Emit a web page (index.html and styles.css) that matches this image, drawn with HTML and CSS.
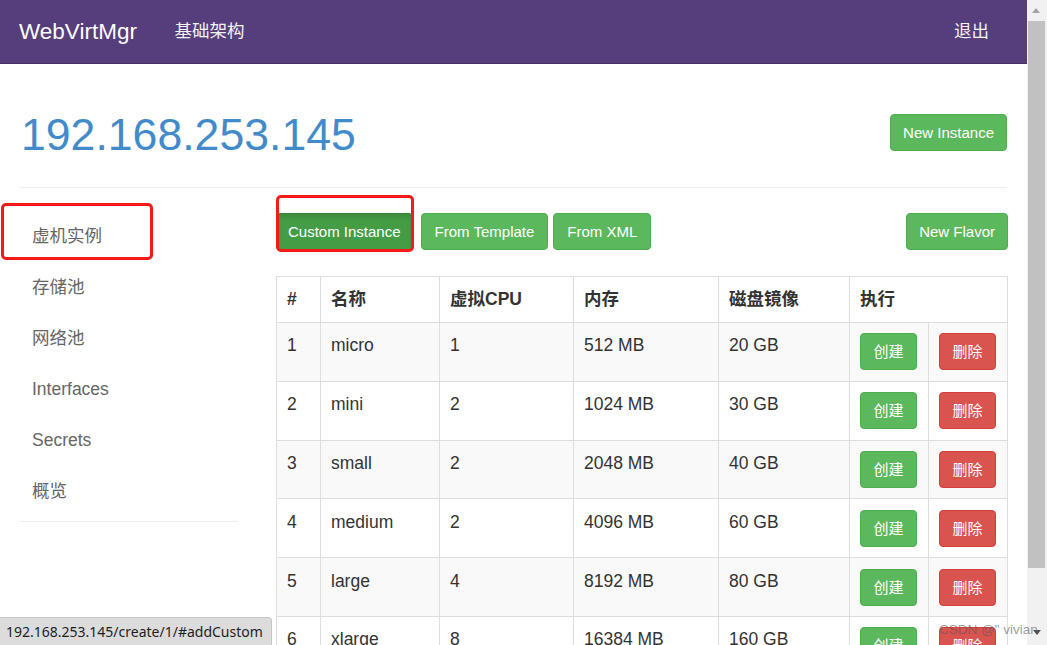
FILE: index.html
```html
<!DOCTYPE html>
<html lang="zh-CN">
<head>
<meta charset="utf-8">
<title>WebVirtMgr</title>
<link rel="stylesheet" href="styles.css">
</head>
<body>
<div class="screen">
  <div class="viewport">
    <nav class="navbar">
      <div class="nav-left">
        <a class="brand">WebVirtMgr</a>
        <a class="nav-link">基础架构</a>
      </div>
      <a class="nav-link">退出</a>
    </nav>
    <div class="container">
      <div class="page-header">
        <h1 class="title">192.168.253.145</h1>
        <a class="btn btn-success header-btn">New Instance</a>
      </div>
      <div class="layout">
        <aside class="sidebar">
          <ul class="side-nav">
            <li>虚机实例</li>
            <li>存储池</li>
            <li>网络池</li>
            <li>Interfaces</li>
            <li>Secrets</li>
            <li>概览</li>
          </ul>
        </aside>
        <main class="main">
          <div class="toolbar">
            <div class="toolbar-left">
              <a class="btn btn-success active">Custom Instance</a>
              <a class="btn btn-success">From Template</a>
              <a class="btn btn-success">From XML</a>
            </div>
            <a class="btn btn-success">New Flavor</a>
          </div>
          <table class="flavors">
            <colgroup>
              <col class="c-num"><col class="c-name"><col class="c-cpu"><col class="c-mem"><col class="c-disk"><col class="c-act"><col class="c-act">
            </colgroup>
            <thead>
              <tr><th>#</th><th>名称</th><th>虚拟CPU</th><th>内存</th><th>磁盘镜像</th><th colspan="2">执行</th></tr>
            </thead>
            <tbody>
              <tr><td>1</td><td>micro</td><td>1</td><td>512 MB</td><td>20 GB</td><td><a class="btn btn-success">创建</a></td><td><a class="btn btn-danger">删除</a></td></tr>
              <tr><td>2</td><td>mini</td><td>2</td><td>1024 MB</td><td>30 GB</td><td><a class="btn btn-success">创建</a></td><td><a class="btn btn-danger">删除</a></td></tr>
              <tr><td>3</td><td>small</td><td>2</td><td>2048 MB</td><td>40 GB</td><td><a class="btn btn-success">创建</a></td><td><a class="btn btn-danger">删除</a></td></tr>
              <tr><td>4</td><td>medium</td><td>2</td><td>4096 MB</td><td>60 GB</td><td><a class="btn btn-success">创建</a></td><td><a class="btn btn-danger">删除</a></td></tr>
              <tr><td>5</td><td>large</td><td>4</td><td>8192 MB</td><td>80 GB</td><td><a class="btn btn-success">创建</a></td><td><a class="btn btn-danger">删除</a></td></tr>
              <tr><td>6</td><td>xlarge</td><td>8</td><td>16384 MB</td><td>160 GB</td><td><a class="btn btn-success">创建</a></td><td><a class="btn btn-danger">删除</a></td></tr>
            </tbody>
          </table>
        </main>
      </div>
    </div>
    <div class="mark mark-side"></div>
    <div class="mark mark-btn"></div>
    <div class="statusbar">192.168.253.145/create/1/#addCustom</div>
  </div>
  <div class="scrollbar">
    <div class="arrow-up"></div>
    <div class="thumb"></div>
    <div class="arrow-down"></div>
  </div>
  <div class="watermark">CSDN @" vivian</div>
</div>
</body>
</html>
```

FILE: styles.css
```css
* { box-sizing: border-box; }
html, body { margin: 0; padding: 0; }
body {
  font-family: "Liberation Sans", "Noto Sans CJK SC", sans-serif;
  font-size: 17.5px;
  color: #333;
  background: #fff;
}
.screen {
  position: relative;
  width: 1047px;
  height: 645px;
  display: flex;
  overflow: hidden;
}
.viewport {
  position: relative;
  width: 1027px;
  height: 645px;
  overflow: hidden;
}
.navbar {
  height: 64px;
  background: #563d7c;
  border-bottom: 1px solid #463166;
  display: flex;
  align-items: center;
  justify-content: space-between;
  padding: 0 19px 0 0;
}
.nav-left { display: flex; align-items: center; }
.brand {
  color: #fff;
  font-size: 22.5px;
  line-height: 25px;
  padding: 0 18.5px 0 19px;
}
.nav-link {
  color: #f2f2f2;
  font-size: 17.5px;
  line-height: 25px;
  padding: 0 19px;
}
.container { padding: 0 20px; }
.page-header {
  display: flex;
  justify-content: space-between;
  align-items: flex-start;
  padding-top: 46px;
  padding-bottom: 27px;
  border-bottom: 1px solid #eee;
  margin-left: -1px;
}
.title {
  margin: 0 0 0 2px;
  font-size: 44.6px;
  line-height: 50px;
  font-weight: 400;
  color: #428bca;
}
.header-btn { margin-top: 4px; }
.btn {
  display: inline-block;
  height: 37px;
  line-height: 35px;
  padding: 0 12px;
  font-size: 15px;
  color: #fff;
  border: 1px solid transparent;
  border-radius: 4px;
  white-space: nowrap;
}
.btn-success { background: #5cb85c; border-color: #4cae4c; }
.btn-success.active { background: #449d44; border-color: #398439; box-shadow: inset 0 3px 5px rgba(0,0,0,.125); }
.btn-danger { background: #d9534f; border-color: #d43f3a; }
.layout {
  display: grid;
  grid-template-columns: 219px 1fr;
  column-gap: 38px;
  margin-left: -1px;
}
.side-nav {
  list-style: none;
  margin: 0;
  padding: 23px 0 4px;
  border-bottom: 1px solid #eee;
}
.side-nav li {
  padding: 13px 13px;
  line-height: 25px;
  color: #666;
  font-size: 17.5px;
}
.toolbar {
  display: flex;
  justify-content: space-between;
  margin-top: 25px;
  margin-bottom: 26px;
}
.toolbar-left { display: flex; gap: 5px; }
.toolbar-left .btn.active { margin-right: 3px; padding: 0 11px; }
.toolbar-left .btn:not(.active) { padding: 0 13px; }
.flavors {
  width: 731px;
  border-collapse: collapse;
  table-layout: fixed;
  border: 1px solid #ddd;
}
.c-num { width: 44px; }
.c-name { width: 119px; }
.c-cpu { width: 134px; }
.c-mem { width: 145px; }
.c-disk { width: 131px; }
.c-act { width: 79px; }
.flavors th, .flavors td {
  border: 1px solid #ddd;
  text-align: left;
  line-height: 25px;
  font-size: 17.5px;
}
.flavors th {
  padding: 10px 10px;
  font-weight: 700;
  vertical-align: bottom;
}
.flavors td {
  padding: 10.4px 10px;
  vertical-align: top;
}
.flavors tbody tr:nth-child(odd) td { background: #f9f9f9; }
.flavors td .btn { vertical-align: top; padding: 0 12.5px; }
.mark {
  position: absolute;
  border: 3px solid #f5191a;
  border-radius: 5px;
}
.mark-side { left: 1px; top: 203px; width: 152px; height: 57px; }
.mark-btn { left: 276px; top: 195px; width: 138px; height: 57px; }
.statusbar {
  position: absolute;
  left: 0;
  top: 617px;
  width: 272px;
  height: 28px;
  background: #dcdcdc;
  border-top: 1px solid #c6c6c6;
  border-right: 1px solid #c6c6c6;
  border-top-right-radius: 4px;
  font-family: "Noto Sans", "Liberation Sans", sans-serif;
  font-size: 14px;
  line-height: 27px;
  padding-left: 6px;
  color: #1e1e1e;
  white-space: nowrap;
}
.scrollbar {
  position: relative;
  width: 20px;
  height: 645px;
  background: #f1f1f1;
}
.thumb {
  position: absolute;
  left: 1px;
  top: 21px;
  width: 17px;
  height: 547px;
  background: #c1c1c1;
}
.arrow-up {
  position: absolute;
  left: 5px;
  top: 8px;
  width: 0; height: 0;
  border-left: 4.5px solid transparent;
  border-right: 4.5px solid transparent;
  border-bottom: 5px solid #a3a3a3;
}
.arrow-down {
  position: absolute;
  left: 6px;
  top: 630px;
  width: 0; height: 0;
  border-left: 4px solid transparent;
  border-right: 4px solid transparent;
  border-top: 5px solid #505050;
}
.watermark {
  position: absolute;
  left: 939px;
  top: 621px;
  font-family: "Liberation Sans", sans-serif;
  font-size: 13.5px;
  line-height: 18px;
  color: rgba(90, 90, 90, 0.6);
  white-space: nowrap;
}
```
